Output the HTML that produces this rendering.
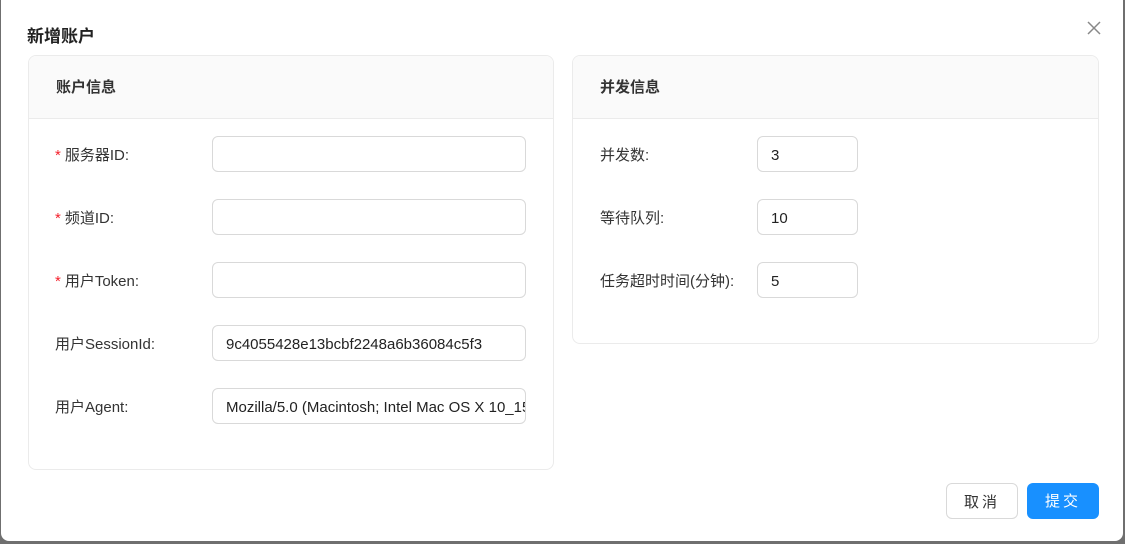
<!DOCTYPE html>
<html><head><meta charset="utf-8"><style>
*{box-sizing:border-box;margin:0;padding:0}
body{width:1125px;height:544px;background:#6f6f6f;font-family:"Liberation Sans","Noto Sans CJK SC",sans-serif;color:#333;position:relative;overflow:hidden}
.modal{position:absolute;left:1px;top:-8px;width:1122px;height:549px;background:#fff;border-radius:8px}
.title{position:absolute;left:27px;top:22px;font-size:17px;font-weight:bold;color:#222}
.close{position:absolute;left:1086px;top:20px}
.card{position:absolute;border:1px solid #ebebeb;border-radius:8px;background:#fff;overflow:hidden}
.hd{height:63px;background:#fafafa;border-bottom:1px solid #ebebeb;padding-left:27px;line-height:63px;font-size:15px;font-weight:bold;color:#333}
.lb{position:absolute;font-size:15px;color:#333;line-height:35px;margin-top:2px}
.lb i{color:#f5222d;font-style:normal;margin-right:4px}
.in{position:absolute;height:36px;border:1px solid #d9d9d9;border-radius:6px;font-size:15px;line-height:34px;padding-top:2px;padding-left:13px;color:#222;white-space:nowrap;overflow:hidden}
.btn{position:absolute;top:483px;height:36px;width:72px;border-radius:6px;font-size:15px;line-height:34px;padding-top:2px;text-align:center;letter-spacing:3px}
</style></head><body>
<div class="modal"></div>
<div class="title">新增账户</div>
<svg class="close" width="16" height="16" viewBox="0 0 16 16"><path d="M2 2L14 14M14 2L2 14" stroke="#888" stroke-width="1.5"/></svg>
<div class="card" style="left:28px;top:55px;width:526px;height:415px"><div class="hd">账户信息</div></div>
<div class="card" style="left:572px;top:55px;width:527px;height:289px"><div class="hd">并发信息</div></div>
<div class="lb" style="left:55px;top:136px"><i>*</i>服务器ID:</div>
<div class="lb" style="left:55px;top:199px"><i>*</i>频道ID:</div>
<div class="lb" style="left:55px;top:262px"><i>*</i>用户Token:</div>
<div class="lb" style="left:55px;top:325px">用户SessionId:</div>
<div class="lb" style="left:55px;top:388px">用户Agent:</div>
<div class="in" style="left:212px;top:136px;width:314px"></div>
<div class="in" style="left:212px;top:199px;width:314px"></div>
<div class="in" style="left:212px;top:262px;width:314px"></div>
<div class="in" style="left:212px;top:325px;width:314px">9c4055428e13bcbf2248a6b36084c5f3</div>
<div class="in" style="left:212px;top:388px;width:314px">Mozilla/5.0 (Macintosh; Intel Mac OS X 10_15_7)</div>
<div class="lb" style="left:600px;top:136px">并发数:</div>
<div class="lb" style="left:600px;top:199px">等待队列:</div>
<div class="lb" style="left:600px;top:262px">任务超时时间(分钟):</div>
<div class="in" style="left:757px;top:136px;width:101px">3</div>
<div class="in" style="left:757px;top:199px;width:101px">10</div>
<div class="in" style="left:757px;top:262px;width:101px">5</div>
<div class="btn" style="left:946px;border:1px solid #d9d9d9;color:#333">取消</div>
<div class="btn" style="left:1027px;background:#1890ff;color:#fff">提交</div>
</body></html>
